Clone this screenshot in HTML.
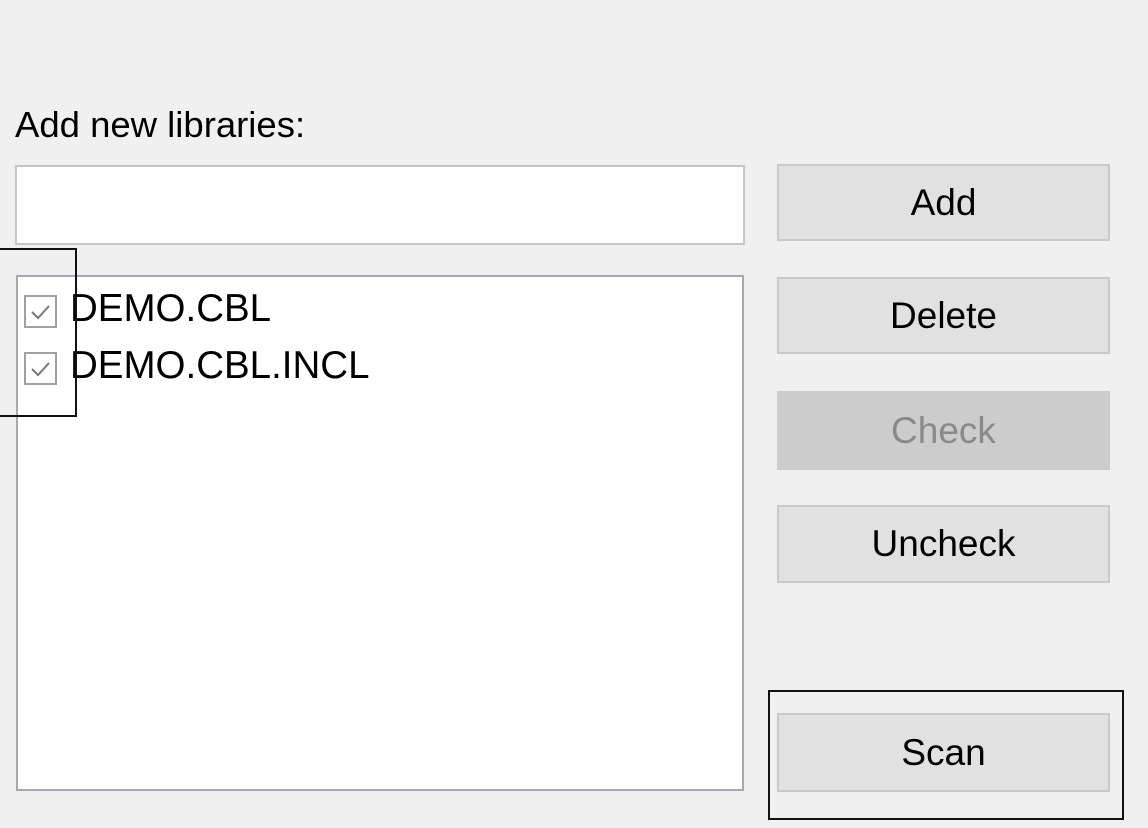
<!DOCTYPE html>
<html><head><style>
body{margin:0;width:1148px;height:828px;background:#f0f0f0;position:relative;overflow:hidden;font-family:"Liberation Sans",Arial,sans-serif;color:#000}
.a{position:absolute;box-sizing:border-box}
.btn{background:#e1e1e1;border:2px solid #c9c9c9;display:flex;align-items:center;justify-content:center;font-size:37px;left:777px;width:333px}
.cb{width:33px;height:33px;border:2px solid #a0a0a0;left:24px;background:#fff}
.t{font-size:38.5px;left:70px;line-height:40px}
</style></head><body>
<div class="a" style="left:15px;top:105px;font-size:36.5px;line-height:40px">Add new libraries:</div>
<div class="a" style="left:15px;top:165px;width:730px;height:80px;background:#fff;border:2px solid #c4c4c4"></div>
<div class="a" style="left:16px;top:275px;width:728px;height:516px;background:#fff;border:2px solid #a8a8b0"></div>
<div class="a cb" style="top:295px"><svg width="29" height="29" style="position:absolute;left:0;top:0"><path d="M6 15 L12 21 L23 9" stroke="#777" stroke-width="2" fill="none"/></svg></div>
<div class="a cb" style="top:352px"><svg width="29" height="29" style="position:absolute;left:0;top:0"><path d="M6 15 L12 21 L23 9" stroke="#777" stroke-width="2" fill="none"/></svg></div>
<div class="a t" style="top:289px">DEMO.CBL</div>
<div class="a t" style="top:346px">DEMO.CBL.INCL</div>
<div class="a" style="left:-4px;top:248px;width:81px;height:169px;border:2px solid #111"></div>
<div class="a btn" style="top:164px;height:77px">Add</div>
<div class="a btn" style="top:277px;height:77px">Delete</div>
<div class="a btn" style="top:391px;height:79px;background:#cccccc;border-color:#cccccc;color:#8a8a8a">Check</div>
<div class="a btn" style="top:505px;height:78px">Uncheck</div>
<div class="a btn" style="top:713px;height:79px">Scan</div>
<div class="a" style="left:768px;top:690px;width:356px;height:130px;border:2px solid #111"></div>
</body></html>
